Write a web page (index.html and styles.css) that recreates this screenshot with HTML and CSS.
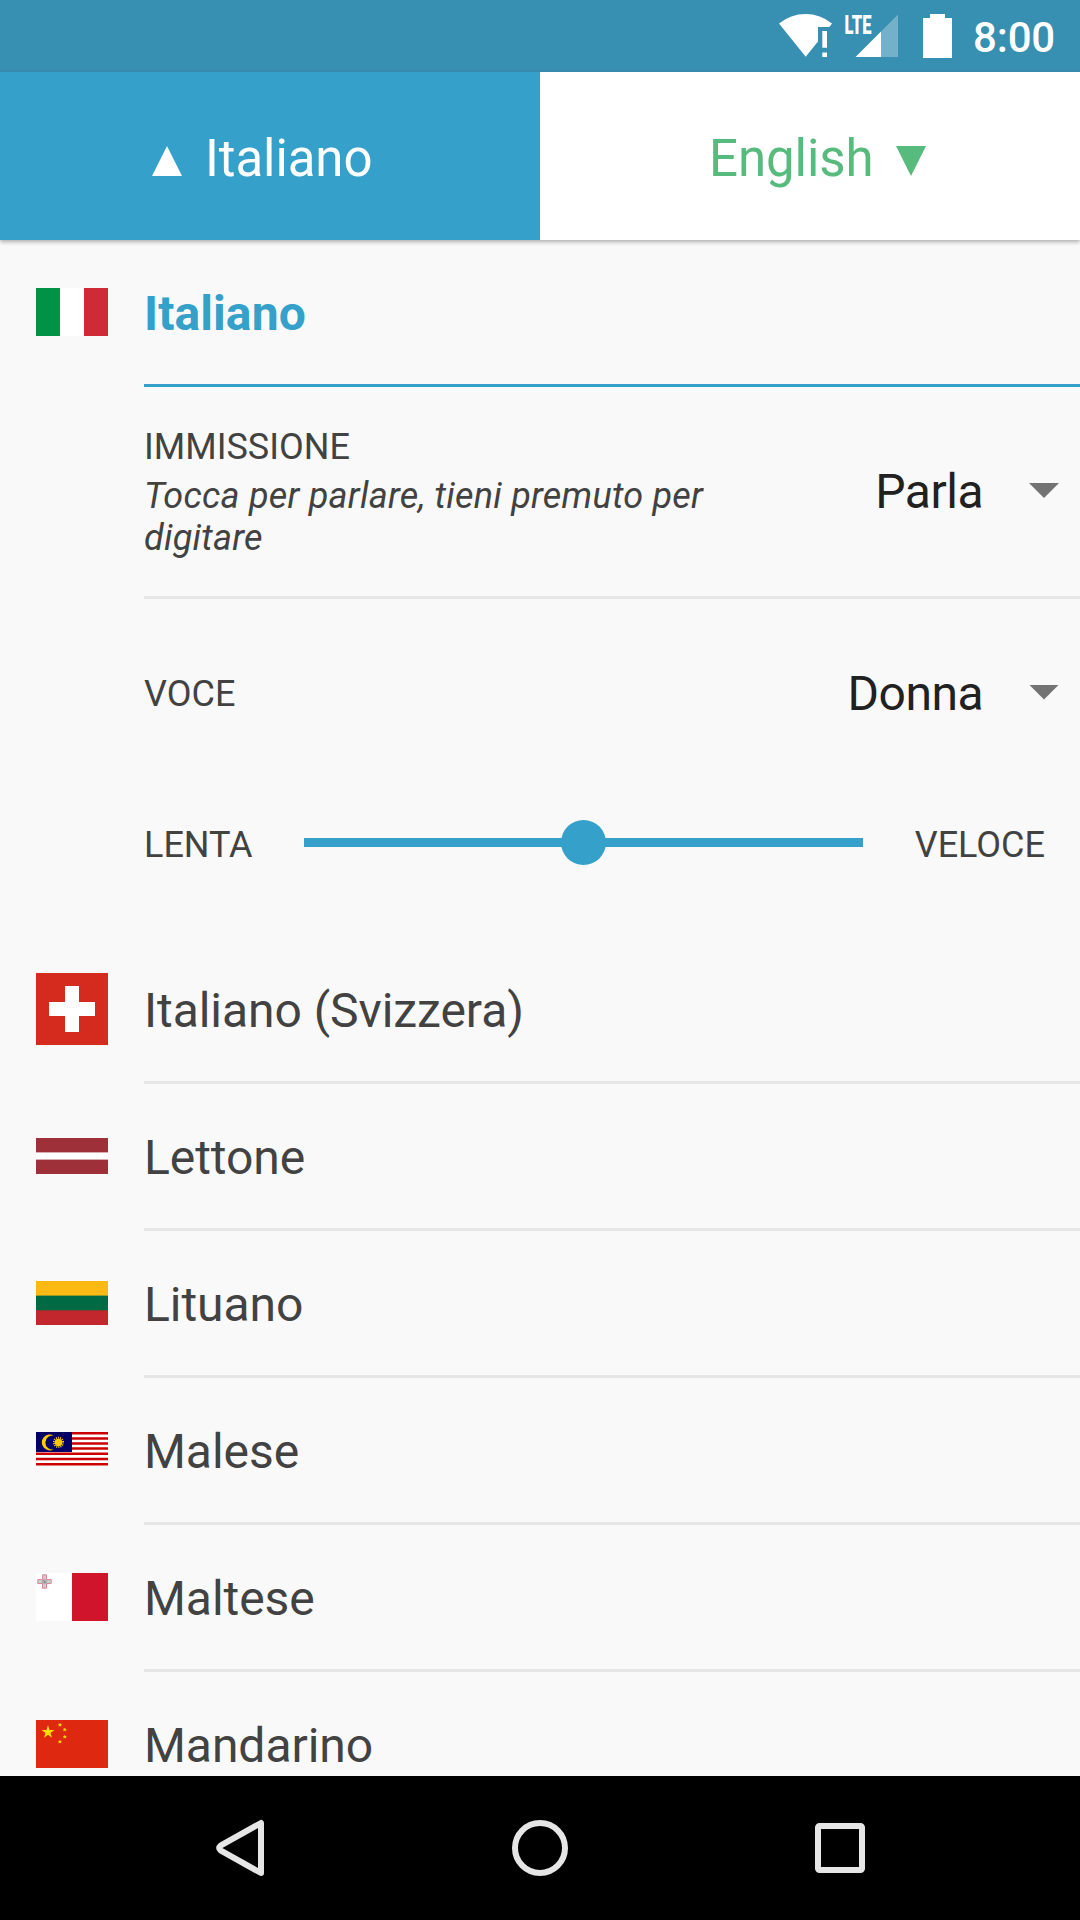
FILE: index.html
```html
<!DOCTYPE html>
<html lang="it">

<head>
    <meta charset="UTF-8">
    <meta name="viewport" content="width=device-width, initial-scale=1.0">
    <title>Lingue</title>
    <link rel="stylesheet" href="styles.css">
</head>

<body>
    <!-- Status bar -->
    <div class="status">
        <svg class="status-icons" width="180" height="72" viewBox="775 0 180 72">
            <path fill="#fff" d="M805.7 56.7 L779 23.6 Q790.5 14 805.7 14 Q820.5 14 832 23.6 L830.5 25.8 Q829.5 27 828 27 H818 V41.5 Z" />
            <path fill="#fff" d="M822.3 31 h4.7 v16.7 h-4.7 Z M822.3 52.5 h4.7 v4.5 h-4.7 Z" />
            <text class="lte" x="844.5" y="33.6" textLength="27" lengthAdjust="spacingAndGlyphs">LTE</text>
            <path fill="#fff" fill-opacity=".3" d="M881 31.5 L898 14.5 V57 H881 Z" />
            <path fill="#fff" d="M855.5 57 L881 31.5 V57 Z" />
            <path fill="#fff" d="M930 14 h15 v4 h7 v40 h-29 v-40 h7 Z" />
        </svg>
        <span class="time">8:00</span>
    </div>

    <!-- Tabs -->
    <div class="tabs">
        <div class="tab active">
            <svg width="30" height="30"><polygon points="15,0 30,30 0,30" /></svg>
            <span>Italiano</span>
        </div>
        <div class="tab">
            <span>English</span>
            <svg width="30" height="30"><polygon points="0,0 30,0 15,30" /></svg>
        </div>
    </div>

    <!-- Languages -->
    <div class="list">
        <div class="row selected">
            <svg class="flag" width="72" height="48">
                <rect width="72" height="48" fill="#fff" />
                <rect width="24" height="48" fill="#009246" />
                <rect x="48" width="24" height="48" fill="#ce2b37" />
            </svg>
            <div class="name">Italiano</div>
        </div>

        <div class="settings">
            <div class="setting input">
                <div class="label">
                    IMMISSIONE
                    <em>Tocca per parlare, tieni premuto per digitare</em>
                </div>
                <div class="value">Parla</div>
                <div class="arrow"></div>
            </div>
            <div class="setting voice">
                <div class="label">VOCE</div>
                <div class="value">Donna</div>
                <div class="arrow"></div>
            </div>
            <div class="speed">
                <span>LENTA</span>
                <div class="slider">
                    <div class="thumb"></div>
                </div>
                <span>VELOCE</span>
            </div>
        </div>

        <div class="row">
            <svg class="flag" width="72" height="72">
                <rect width="72" height="72" fill="#d52b1e" />
                <path fill="#fff" d="M29 13 h14 v16 h16 v14 h-16 v16 h-14 v-16 h-16 v-14 h16 Z" />
            </svg>
            <div class="name">Italiano (Svizzera)</div>
        </div>
        <div class="row">
            <svg class="flag" width="72" height="36">
                <rect width="72" height="36" fill="#9e3039" />
                <rect y="14.4" width="72" height="7.2" fill="#fff" />
            </svg>
            <div class="name">Lettone</div>
        </div>
        <div class="row">
            <svg class="flag" width="72" height="44">
                <rect width="72" height="44" fill="#c1272d" />
                <rect width="72" height="29.3" fill="#006a44" />
                <rect width="72" height="14.6" fill="#fdb913" />
            </svg>
            <div class="name">Lituano</div>
        </div>
        <div class="row">
            <svg class="flag malaysia" width="72" height="34">
                <rect width="72" height="34" fill="#fff" />
                <path stroke="#cc0001" stroke-width="2.5" d="M0 1.2H72 M0 6.4H72 M0 11.5H72 M0 16.6H72 M0 21.8H72 M0 26.9H72 M0 32.2H72" />
                <rect width="36" height="20" fill="#010066" />
                <path fill="#fc0" d="M18 3.6 A8 8 0 1 0 18 17.2 A7 7 0 1 1 18 3.6 Z" />
                <circle cx="22.5" cy="10.4" r="3.7" fill="#fc0" />
                <circle cx="22.5" cy="10.4" r="4.6" fill="none" stroke="#fc0" stroke-width="2" stroke-dasharray="1 1.06" />
            </svg>
            <div class="name">Malese</div>
        </div>
        <div class="row">
            <svg class="flag" width="72" height="48">
                <rect width="36" height="48" fill="#fff" />
                <rect x="36" width="36" height="48" fill="#cf142b" />
                <path fill="#ccc" stroke="#d98a94" d="M6.5 1.8 h4 v4.7 h4.7 v4 h-4.7 v4.7 h-4 v-4.7 h-4.7 v-4 h4.7 Z" />
                <circle cx="8.5" cy="8.5" r="2.8" fill="#b0b0b0" />
                <path stroke="#777" d="M7.5 7.5 l2 2.5" />
            </svg>
            <div class="name">Maltese</div>
        </div>
        <div class="row">
            <svg class="flag" width="72" height="48">
                <rect width="72" height="48" fill="#de2910" />
                <g fill="#ffde00">
                    <path d="M12 5.2 L13.5 9.9 H18.5 L14.5 12.9 L16 17.7 L12 14.8 L8 17.7 L9.5 12.9 L5.5 9.9 H10.5 Z" />
                    <path d="M24 2.8 L24.6 4.1 L26 4.3 L25 5.3 L25.2 6.7 L24 6 L22.4 6.3 L22.8 5 L22 3.8 L23.4 4 Z" />
                    <path d="M29 7.6 L29.4 9 L30.8 9.4 L29.6 10.2 L29.7 11.6 L28.6 10.7 L27 10.9 L27.8 9.7 L27.2 8.4 L28.4 8.6 Z" />
                    <path d="M28.8 14.7 L29.4 16 L30.8 16.2 L29.8 17.1 L30.1 18.4 L28.8 17.8 L27.5 18.5 L27.7 17.1 L26.8 16.2 L28.2 16 Z" />
                    <path d="M24 19.5 L24.6 20.9 L26 21 L25 22 L25.2 23.3 L24 22.7 L22.6 23.3 L22.8 22 L22 21 L23.4 20.9 Z" />
                </g>
            </svg>
            <div class="name">Mandarino</div>
        </div>
    </div>

    <!-- Navigation bar -->
    <div class="navbar">
        <svg width="60" height="60">
            <path d="M51 5 V55 L10.5 32.3 Q7.8 30 10.5 27.7 Z" />
        </svg>
        <svg width="60" height="60">
            <circle cx="30" cy="30" r="25" />
        </svg>
        <svg width="60" height="60">
            <rect x="8" y="8" width="44" height="44" rx="1.5" />
        </svg>
    </div>
</body>

</html>
```
FILE: styles.css
```css
body {
    display: flex;
    flex-direction: column;
    margin: 0;
    height: 100vh;
    overflow: hidden;
    background-color: #f9f9f9;
    color: #424242;
    font-family: Roboto, sans-serif;
    font-size: 48px;
}

svg {
    display: block;
    flex: none;
}

/* status bar */
.status {
    display: flex;
    align-items: center;
    justify-content: flex-end;
    flex: none;
    height: 72px;
    padding-right: 25px;
    background-color: #378fb2;
    color: white;
}

.status-icons {
    margin-right: 18px;
}

.lte {
    fill: white;
    font-size: 26px;
    font-weight: 900;
}

.time {
    padding-top: 2px;
    font-size: 42px;
    font-weight: 500;
    letter-spacing: -0.2px;
}

/* tabs */
.tabs {
    display: flex;
    flex: none;
    height: 168px;
    z-index: 1;
    box-shadow: 0 2px 4px rgba(0, 0, 0, 0.3);
}

.tab {
    display: flex;
    align-items: center;
    justify-content: center;
    flex: 1;
    gap: 23px;
    padding: 5px 0 0 16px;
    box-sizing: border-box;
    background-color: white;
    color: #57bb7e;
    fill: #57bb7e;
    font-size: 51px;
    letter-spacing: -0.1px;
}

.tab svg {
    margin-top: 4px;
}

.tab.active {
    padding: 5px 15px 0 0;
    background-color: #35a0ca;
    color: white;
    fill: white;
}

/* list */
.list {
    flex: 1;
    min-height: 0;
    overflow: hidden;
}

.row {
    display: flex;
    align-items: center;
    height: 147px;
    padding-left: 36px;
}

.flag {
    margin: 0 36px 3px 0;
}

.malaysia {
    margin-bottom: 5px;
}

.name {
    flex: 1;
    height: 144px;
    line-height: 147px;
    letter-spacing: -0.05px;
    border-bottom: 3px solid #e6e6e6;
}

.selected .name {
    border-color: #35a0ca;
    color: #35a0ca;
    font-weight: bold;
    letter-spacing: 0.1px;
}

.settings {
    height: 550px;
    padding-left: 144px;
    font-size: 36px;
}

.setting {
    display: flex;
    align-items: center;
}

.input {
    height: 209px;
    border-bottom: 3px solid #e6e6e6;
}

.voice {
    height: 188px;
}

.label {
    flex: 1;
    padding-top: 2px;
    line-height: 42px;
}

.label em {
    display: block;
    width: 580px;
    margin-top: 7px;
    letter-spacing: 0.25px;
}

.value {
    color: #212121;
    font-size: 48px;
    letter-spacing: -0.5px;
}

.arrow {
    width: 30px;
    height: 15px;
    margin: 0 21px 2px 46px;
    background-color: #737373;
    clip-path: polygon(0 0, 100% 0, 50% 100%);
}

/* speed slider */
.speed {
    display: flex;
    align-items: center;
    justify-content: space-between;
    height: 111px;
    padding-right: 35px;
}

.speed span {
    padding-top: 5px;
}

.slider {
    display: flex;
    align-items: center;
    justify-content: center;
    width: 559px;
    height: 9px;
    background-color: #35a0ca;
}

.thumb {
    flex: none;
    width: 45px;
    height: 45px;
    border-radius: 50%;
    background-color: #35a0ca;
}

/* navigation bar */
.navbar {
    display: flex;
    align-items: center;
    justify-content: center;
    flex: none;
    gap: 240px;
    height: 144px;
    background-color: black;
}

.navbar svg {
    fill: none;
    stroke: #e6e6e6;
    stroke-width: 6;
    stroke-linejoin: round;
}
```
